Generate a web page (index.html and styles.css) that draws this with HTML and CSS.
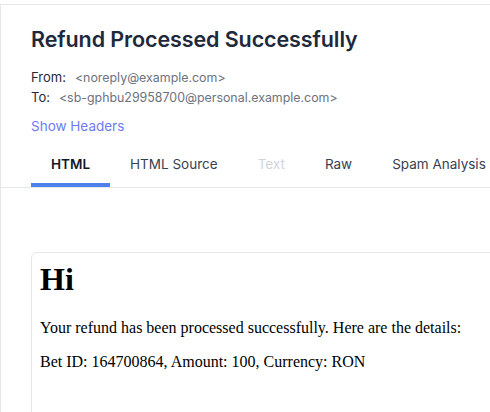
FILE: index.html
```html
<!DOCTYPE html>
<html>
<head>
<meta charset="utf-8">
<link rel="stylesheet" href="styles.css">
</head>
<body>
<div class="panel">
  <header class="head">
    <h2 class="title">Refund Processed Successfully</h2>
    <div class="addr">
      <div class="row"><span class="lbl">From:</span><span class="val">&lt;noreply@example.com&gt;</span></div>
      <div class="row"><span class="lbl">To:</span><span class="val">&lt;sb-gphbu29958700@personal.example.com&gt;</span></div>
    </div>
    <a class="show">Show Headers</a>
  </header>
  <nav class="tabs">
    <span class="tab active">HTML</span>
    <span class="tab">HTML Source</span>
    <span class="tab disabled">Text</span>
    <span class="tab">Raw</span>
    <span class="tab">Spam Analysis</span>
  </nav>
  <section class="body">
    <div class="card">
      <h1>Hi</h1>
      <p>Your refund has been processed successfully. Here are the details:</p>
      <p>Bet ID: 164700864, Amount: 100, Currency: RON</p>
    </div>
  </section>
</div>
</body>
</html>
```
FILE: styles.css
```css
html, body {
  margin: 0;
  padding: 0;
  background: #fff;
  overflow: hidden;
}
body {
  font-family: Inter, "Noto Sans", sans-serif;
  padding-top: 4px;
  height: 412px;
  box-sizing: border-box;
}
.panel {
  width: 640px;
  border-top: 1px solid #e5e7eb;
  border-left: 1px solid #e5e7eb;
  height: 407px;
  overflow: hidden;
}
.head {
  padding: 20px 0 0 30px;
}
.title {
  margin: 0;
  font-size: 21.5px;
  font-weight: 600;
  line-height: 28px;
  color: #1e293b;
  letter-spacing: -0.1px;
}
.addr {
  margin-top: 15px;
  font-size: 12.4px;
  line-height: 19.5px;
}
.row {
  display: flex;
  align-items: baseline;
  gap: 9px;
}
.lbl {
  color: #1f2937;
  font-size: 13px;
}
.val {
  color: #6b7280;
}
.show {
  display: block;
  margin-top: 9px;
  font-size: 13.5px;
  line-height: 20px;
  color: #6b7cf0;
}
.tabs {
  display: flex;
  padding-left: 30px;
  margin-top: 9px;
  border-bottom: 1px solid #e5e7eb;
}
.tab {
  padding: 0 20px;
  height: 42px;
  line-height: 38px;
  font-size: 13.5px;
  font-weight: 400;
  color: #374151;
  box-sizing: border-box;
  border-bottom: 4px solid transparent;
  white-space: nowrap;
}
.tab.active {
  color: #111827;
  font-weight: 600;
  border-bottom-color: #4d80ea;
  border-radius: 4px 4px 0 0;
}
.tab.disabled {
  color: #d1d5db;
}
.body {
  padding: 64px 0 0 30px;
}
.card {
  border: 1px solid #e5e7eb;
  border-radius: 6px;
  padding: 8px 8px;
  min-height: 220px;
  font-family: "Liberation Serif", "Times New Roman", serif;
  color: #000;
}
.card h1 {
  margin: 0 0 21px;
  font-size: 32px;
  font-weight: 700;
}
.card p {
  margin: 16px 0;
  font-size: 16px;
}
```
